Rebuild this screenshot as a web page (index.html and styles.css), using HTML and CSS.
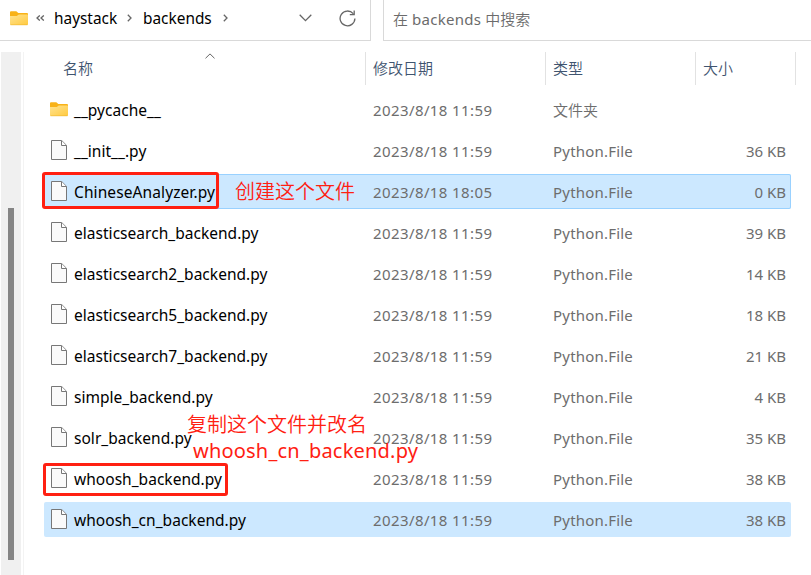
FILE: index.html
```
<!DOCTYPE html>
<html lang="zh-CN">
<head>
<meta charset="utf-8">
<title>backends</title>
<link rel="stylesheet" href="styles.css">
</head>
<body>
<svg class="defs" width="0" height="0" aria-hidden="true">
  <defs>
    <linearGradient id="fold" x1="0" y1="0" x2="1" y2="1"><stop offset="0" stop-color="#ffe391"/><stop offset="1" stop-color="#ffca40"/></linearGradient>
    <symbol id="folder" viewBox="0 0 18 15"><path d="M0 1.2Q0 .2 1 .2H6.3L8.3 2H17Q18 2 18 3V7H0Z" fill="#f8b218"/><path d="M0 5H6.8L8.8 3.4H17.2Q18 3.4 18 4.2V13.2Q18 14 17.2 14H.8Q0 14 0 13.2Z" fill="url(#fold)"/><path d="M.5 13.8H17.5" stroke="#eeb52d" stroke-width=".6"/></symbol>
    <symbol id="file" viewBox="0 0 16 20"><path d="M.5.5H10.7L15.5 5.3V19.5H.5Z" fill="#fafafa" stroke="#777"/><path d="M10.5.8V5.5H15.2" fill="#fff" stroke="#777"/></symbol>
  </defs>
</svg>
<header class="toolbar">
  <nav class="address">
    <svg class="folder"><use href="#folder"/></svg>
    <svg class="more" viewBox="0 0 9 6"><path d="M3.8.4 1 3 3.8 5.6M7.8.4 5 3 7.8 5.6"/></svg>
    <span class="crumb first">haystack</span>
    <svg class="sep" viewBox="0 0 5 8"><path d="M.8.8 4 4 .8 7.2"/></svg>
    <span class="crumb second">backends</span>
    <svg class="sep" viewBox="0 0 5 8"><path d="M.8.8 4 4 .8 7.2"/></svg>
    <svg class="down" viewBox="0 0 13 8"><path d="M.7.8 6.5 6.6 12.3.8"/></svg>
    <svg class="reload" viewBox="0 0 17 17"><path d="M14.2 3.7A7.4 7.4 0 1 0 15.9 8.5M15.2.5V4.7H10.8"/></svg>
  </nav>
  <div class="search">在 <span>backends</span> 中搜索</div>
</header>
<main class="content">
  <aside class="scroll"><div class="thumb"></div></aside>
  <section class="list">
    <div class="head">
      <div class="col c-name">名称<svg class="sort" viewBox="0 0 10 6"><path d="M.5 5.3 5 .9 9.5 5.3"/></svg></div>
      <div class="col">修改日期</div>
      <div class="col">类型</div>
      <div class="col">大小</div>
    </div>
    <div class="rows">
      <div class="row"><svg class="folder"><use href="#folder"/></svg><span class="name">__pycache__</span><span class="date">2023/8/18 11:59</span><span class="cjk">文件夹</span><span class="size"></span></div>
      <div class="row"><svg class="file"><use href="#file"/></svg><span class="name">__init__.py</span><span class="date">2023/8/18 11:59</span><span class="type">Python.File</span><span class="size">36 KB</span></div>
      <div class="row selected focused"><svg class="file"><use href="#file"/></svg><span class="name">ChineseAnalyzer.py</span><span class="date">2023/8/18 18:05</span><span class="type">Python.File</span><span class="size">0 KB</span></div>
      <div class="row"><svg class="file"><use href="#file"/></svg><span class="name">elasticsearch_backend.py</span><span class="date">2023/8/18 11:59</span><span class="type">Python.File</span><span class="size">39 KB</span></div>
      <div class="row"><svg class="file"><use href="#file"/></svg><span class="name">elasticsearch2_backend.py</span><span class="date">2023/8/18 11:59</span><span class="type">Python.File</span><span class="size">14 KB</span></div>
      <div class="row"><svg class="file"><use href="#file"/></svg><span class="name">elasticsearch5_backend.py</span><span class="date">2023/8/18 11:59</span><span class="type">Python.File</span><span class="size">18 KB</span></div>
      <div class="row"><svg class="file"><use href="#file"/></svg><span class="name">elasticsearch7_backend.py</span><span class="date">2023/8/18 11:59</span><span class="type">Python.File</span><span class="size">21 KB</span></div>
      <div class="row"><svg class="file"><use href="#file"/></svg><span class="name">simple_backend.py</span><span class="date">2023/8/18 11:59</span><span class="type">Python.File</span><span class="size">4 KB</span></div>
      <div class="row"><svg class="file"><use href="#file"/></svg><span class="name">solr_backend.py</span><span class="date">2023/8/18 11:59</span><span class="type">Python.File</span><span class="size">35 KB</span></div>
      <div class="row"><svg class="file"><use href="#file"/></svg><span class="name">whoosh_backend.py</span><span class="date">2023/8/18 11:59</span><span class="type">Python.File</span><span class="size">38 KB</span></div>
      <div class="row selected"><svg class="file"><use href="#file"/></svg><span class="name">whoosh_cn_backend.py</span><span class="date">2023/8/18 11:59</span><span class="type">Python.File</span><span class="size">38 KB</span></div>
    </div>
  </section>
</main>
<div class="mark mark-create"></div>
<div class="mark mark-copy"></div>
<div class="note note-create">创建这个文件</div>
<div class="note note-copy">复制这个文件并改名</div>
<div class="note note-name">whoosh_cn_backend.py</div>
</body>
</html>
```
FILE: styles.css
```
* { box-sizing: border-box; }
body {
  margin: 0;
  width: 811px;
  height: 575px;
  overflow: hidden;
  position: relative;
  background: #fff;
  color: #000;
  font: 15px/20px "Noto Sans", "Noto Sans CJK SC", sans-serif;
  white-space: nowrap;
}
.defs { position: absolute; }
svg { display: block; flex: none; }
svg > path { fill: none; stroke: #666; stroke-width: 1.3; }
.folder { width: 18px; height: 15px; }
.file { width: 16px; height: 20px; }

.toolbar { display: flex; gap: 12px; height: 41px; }
.address {
  width: 371px;
  display: flex;
  align-items: center;
  padding: 0 14px 4px 10px;
  border: solid #d9d9d9;
  border-width: 0 1px 1px 0;
}
.more { width: 9px; height: 6px; margin: 0 9px 0 8px; }
.crumb { font-size: 15.4px; padding-top: 2px; }
.crumb.first { width: 73px; }
.crumb.second { width: 80px; }
.sep { width: 5px; height: 8px; }
.crumb + .sep { margin-right: 11px; }
.address .down { width: 13px; height: 8px; margin: 0 27px 0 auto; }
.reload { width: 17px; height: 17px; }
.search {
  flex: 1;
  padding: 9px 0 0 9px;
  border: solid #d9d9d9;
  border-width: 0 0 1px 1px;
  color: #6b6b6b;
}
.search span { letter-spacing: .3px; }

.content { display: flex; height: 534px; padding-top: 11px; }
.scroll {
  width: 24px;
  margin-right: 20px;
  padding: 156px 0 0 8px;
  background: linear-gradient(90deg, #fff 1px, #f0f0f0 1px, #f0f0f0 21px, #fff 21px, #fff 23px, #f3f3f3 23px);
}
.thumb { width: 6px; height: 352px; background: #858585; }
.list { width: 752px; }
.head {
  display: grid;
  grid-template-columns: 322px 180px 150px 100px;
  height: 32px;
  color: #3f546f;
  line-height: 33px;
}
.head, .cjk, .search { font-weight: 350; }
.search span { font-weight: 400; }
.col { padding-left: 7px; border-right: 1px solid #e2e2e2; }
.c-name { display: flex; padding-left: 19px; }
.sort { width: 10px; height: 6px; margin: 1px 0 0 112px; }
.sort path { stroke-width: 1; }

.rows { display: grid; gap: 6px; padding-top: 8px; width: 747px; }
.row {
  display: grid;
  grid-template-columns: 24px 299px 180px 100px 1fr;
  align-items: center;
  height: 35px;
  padding: 0 5px 0 6px;
  border-radius: 2px;
  color: #6d6d6d;
}
.row .file { align-self: start; margin: 7px 0 0 1px; }
.row .folder { align-self: start; margin-top: 10px; }
.name { color: #000; font-size: 15.5px; letter-spacing: .03px; }
.date { letter-spacing: .4px; }
.type { letter-spacing: .2px; }
.size { text-align: right; }
.selected { background: #cce8ff; }
.focused { box-shadow: inset 0 0 0 1px #99d1ff; }
.focused .name { letter-spacing: .1px; }

.mark { position: absolute; border: 3px solid #ff2012; border-radius: 3px; }
.mark-create { left: 42px; top: 172px; width: 177px; height: 37px; }
.mark-copy { left: 43px; top: 463px; width: 185px; height: 33px; }
.note { position: absolute; color: #ff2012; font-size: 20px; line-height: 28px; font-weight: 350; }
.note-create { left: 235px; top: 178px; }
.note-copy { left: 187px; top: 411px; }
.note-name { left: 193px; top: 437px; font-weight: 400; letter-spacing: .2px; }
```
